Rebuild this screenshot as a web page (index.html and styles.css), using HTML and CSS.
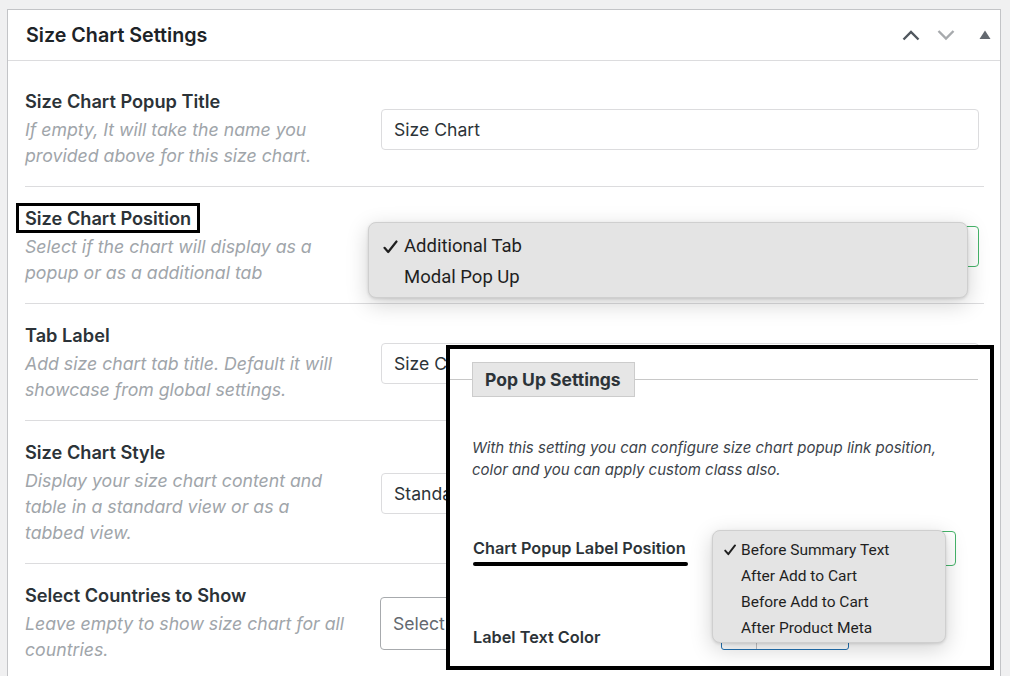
FILE: index.html
```html
<!DOCTYPE html>
<html>
<head>
<meta charset="utf-8">
<link rel="stylesheet" href="styles.css">
</head>
<body>
<div class="panel">
  <div class="panel-head">
    <h2>Size Chart Settings</h2>
    <div class="head-icons">
      <svg class="ic-up" width="18" height="12" viewBox="0 0 18 12"><polyline points="1.5,10.5 9,3 16.5,10.5" fill="none" stroke="#50575e" stroke-width="2.4"/></svg>
      <svg class="ic-down" width="18" height="12" viewBox="0 0 18 12"><polyline points="1.5,2 9,9.5 16.5,2" fill="none" stroke="#a7aaad" stroke-width="2.4"/></svg>
      <svg class="ic-tri" width="12" height="9" viewBox="0 0 12 9"><polygon points="0.5,9 6,0.5 11.5,9" fill="#646970"/></svg>
    </div>
  </div>
  <div class="panel-body">
    <div class="row first">
      <div class="lab">
        <div class="title">Size Chart Popup Title</div>
        <div class="desc">If empty, It will take the name you<br>provided above for this size chart.</div>
      </div>
      <div class="field"><div class="input">Size Chart</div></div>
    </div>
    <div class="row">
      <div class="lab">
        <div class="title"><span class="boxed">Size Chart Position</span></div>
        <div class="desc">Select if the chart will display as a<br>popup or as a additional tab</div>
      </div>
      <div class="field"><div class="input focus"></div></div>
    </div>
    <div class="row">
      <div class="lab">
        <div class="title">Tab Label</div>
        <div class="desc">Add size chart tab title. Default it will<br>showcase from global settings.</div>
      </div>
      <div class="field"><div class="input">Size Chart</div></div>
    </div>
    <div class="row">
      <div class="lab">
        <div class="title">Size Chart Style</div>
        <div class="desc">Display your size chart content and<br>table in a standard view or as a<br>tabbed view.</div>
      </div>
      <div class="field"><div class="input">Standard</div></div>
    </div>
    <div class="row">
      <div class="lab">
        <div class="title">Select Countries to Show</div>
        <div class="desc">Leave empty to show size chart for all<br>countries.</div>
      </div>
      <div class="field"><div class="input multi">Select countries</div></div>
    </div>
  </div>

  <div class="menu menu-pos">
    <div class="item"><span class="chk"><svg width="15" height="14" viewBox="0 0 15 14"><polyline points="1.5,7.8 5.2,12 13.5,1.5" fill="none" stroke="#1f1f1f" stroke-width="2.2" stroke-linecap="round" stroke-linejoin="round"/></svg></span>Additional Tab</div>
    <div class="item"><span class="chk"></span>Modal Pop Up</div>
  </div>

  <div class="popup">
    <div class="pop-head">
      <span class="ln short"></span>
      <span class="tab">Pop Up Settings</span>
      <span class="ln"></span>
    </div>
    <div class="pop-desc">With this setting you can configure size chart popup link position,<br>color and you can apply custom class also.</div>
    <div class="pop-row r1">
      <div class="pop-lab">
        <div class="pop-title">Chart Popup Label Position</div>
        <div class="mark"></div>
      </div>
      <div class="pop-select"></div>
    </div>
    <div class="pop-row r2">
      <div class="pop-lab"><div class="pop-title">Label Text Color</div></div>
      <div class="picker"><span class="swatch"></span><span class="pick-btn"></span></div>
    </div>
    <div class="menu menu-label">
      <div class="item"><span class="chk"><svg width="12" height="12" viewBox="0 0 12 12"><polyline points="1.2,6.6 4.3,10.2 11,1.4" fill="none" stroke="#1f1f1f" stroke-width="1.9" stroke-linecap="round" stroke-linejoin="round"/></svg></span>Before Summary Text</div>
      <div class="item"><span class="chk"></span>After Add to Cart</div>
      <div class="item"><span class="chk"></span>Before Add to Cart</div>
      <div class="item"><span class="chk"></span>After Product Meta</div>
    </div>
  </div>
</div>
</body>
</html>
```

FILE: styles.css
```css
html, body {
  margin: 0;
  padding: 0;
  height: 676px;
  overflow: hidden;
}
body {
  background: #f0f0f1;
  font-family: Inter, "Noto Sans", sans-serif;
  color: #2c3338;
}
.panel {
  position: relative;
  margin: 9px 9px 0 7px;
  background: #fff;
  border: 1px solid #c3c4c7;
  border-bottom: 0;
  height: 720px;
}
.panel-head {
  height: 50px;
  border-bottom: 1px solid #dcdcde;
  display: flex;
  align-items: center;
  justify-content: space-between;
  padding: 0 9px 0 18px;
}
.panel-head h2 {
  margin: 0;
  font-size: 19.7px;
  font-weight: 600;
  color: #1d2327;
}
.head-icons {
  display: flex;
  align-items: center;
}
.ic-down { margin-left: 17px; }
.ic-tri { margin-left: 24px; margin-top: -2px; }

.panel-body {
  padding: 0 16px 0 17px;
}
.row {
  display: flex;
  align-items: center;
  padding: 19px 0 17px;
  border-bottom: 1px solid #dcdcde;
}
.row.first { padding-top: 28px; }
.lab {
  flex: 0 0 356px;
}
.title {
  font-size: 18.2px;
  font-weight: 600;
  line-height: 24px;
  color: #2c3338;
  white-space: nowrap;
}
.boxed {
  display: inline-block;
  padding: 0 6px;
  margin: 0 -6px;
  outline: 3px solid #000;
  line-height: 24px;
  height: 24px;
}
.desc {
  margin-top: 4px;
  font-size: 17.7px;
  font-style: italic;
  line-height: 26px;
  color: #a0a5aa;
  white-space: nowrap;
}
.field {
  flex: 1;
  margin-right: 5px;
}
.input {
  box-sizing: border-box;
  height: 41px;
  border: 1px solid #dcdcde;
  border-radius: 4px;
  padding: 0 12px;
  display: flex;
  align-items: center;
  font-size: 17.6px;
  color: #2c3338;
  white-space: nowrap;
  overflow: hidden;
}
.input.focus { border-color: #46b46a; }
.input.multi {
  height: 53px;
  border-color: #a7aaad;
  color: #646970;
  margin-left: -1px;
}

.menu {
  position: absolute;
  box-sizing: border-box;
  background: #e4e4e4;
  border: 1px solid #cfcfcf;
  border-radius: 8px;
  box-shadow: 0 6px 22px rgba(0,0,0,0.18), 0 1px 3px rgba(0,0,0,0.12);
  font-family: Roboto, "Noto Sans", sans-serif;
  color: #1f1f1f;
}
.menu .item {
  display: flex;
  align-items: center;
  white-space: nowrap;
}
.menu .chk {
  display: flex;
  align-items: center;
}
.menu-pos {
  left: 360px;
  top: 212px;
  width: 600px;
  height: 76px;
  padding: 8px 0 0 14px;
  font-size: 18.5px;
}
.menu-pos .item { line-height: 31px; }
.menu-pos .chk { width: 21px; }

.popup {
  position: absolute;
  left: 438px;
  top: 335px;
  width: 548px;
  height: 325px;
  box-sizing: border-box;
  border: 4px solid #000;
  background: #fff;
  padding-top: 13px;
  z-index: 2;
}
.pop-head {
  display: flex;
  align-items: center;
  margin-right: 12px;
}
.ln {
  flex: 1;
  height: 1px;
  background: #c8c8c8;
}
.ln.short { flex: 0 0 22px; }
.tab {
  box-sizing: border-box;
  width: 163px;
  height: 35px;
  line-height: 33px;
  padding-left: 12px;
  background: #e6e6e6;
  border: 1px solid #cccccc;
  font-size: 17.5px;
  font-weight: 700;
  color: #2c3338;
  white-space: nowrap;
}
.pop-desc {
  margin: 40px 0 0 22px;
  font-size: 15px;
  font-style: italic;
  line-height: 22px;
  color: #3c434a;
  white-space: nowrap;
}
.pop-row {
  display: flex;
  margin-left: 23px;
  align-items: flex-start;
}
.pop-row.r1 { margin-top: 56px; }
.pop-row.r2 { margin-top: 54px; }
.pop-row.r2 .pop-lab { margin-top: 6px; }
.pop-lab { flex: 0 0 248px; }
.pop-title {
  font-size: 16.3px;
  font-weight: 600;
  line-height: 22px;
  color: #2c3338;
  white-space: nowrap;
}
.mark {
  margin-top: 3px;
  width: 215px;
  height: 4px;
  border-radius: 2px;
  background: #000;
}
.pop-select {
  box-sizing: border-box;
  margin-top: -6px;
  width: 235px;
  height: 35px;
  border: 1px solid #46b46a;
  border-radius: 4px;
}
.picker {
  box-sizing: border-box;
  display: flex;
  width: 128px;
  height: 30px;
  border: 1px solid #2271b1;
  border-radius: 3px;
}
.swatch {
  width: 34px;
  border-right: 1px solid #c3c4c7;
}
.menu-label {
  left: 262px;
  top: 181px;
  width: 234px;
  height: 113px;
  padding: 6px 0 0 11px;
  font-size: 15.5px;
}
.menu-label .item { line-height: 26px; }
.menu-label .chk { width: 17px; }
```
